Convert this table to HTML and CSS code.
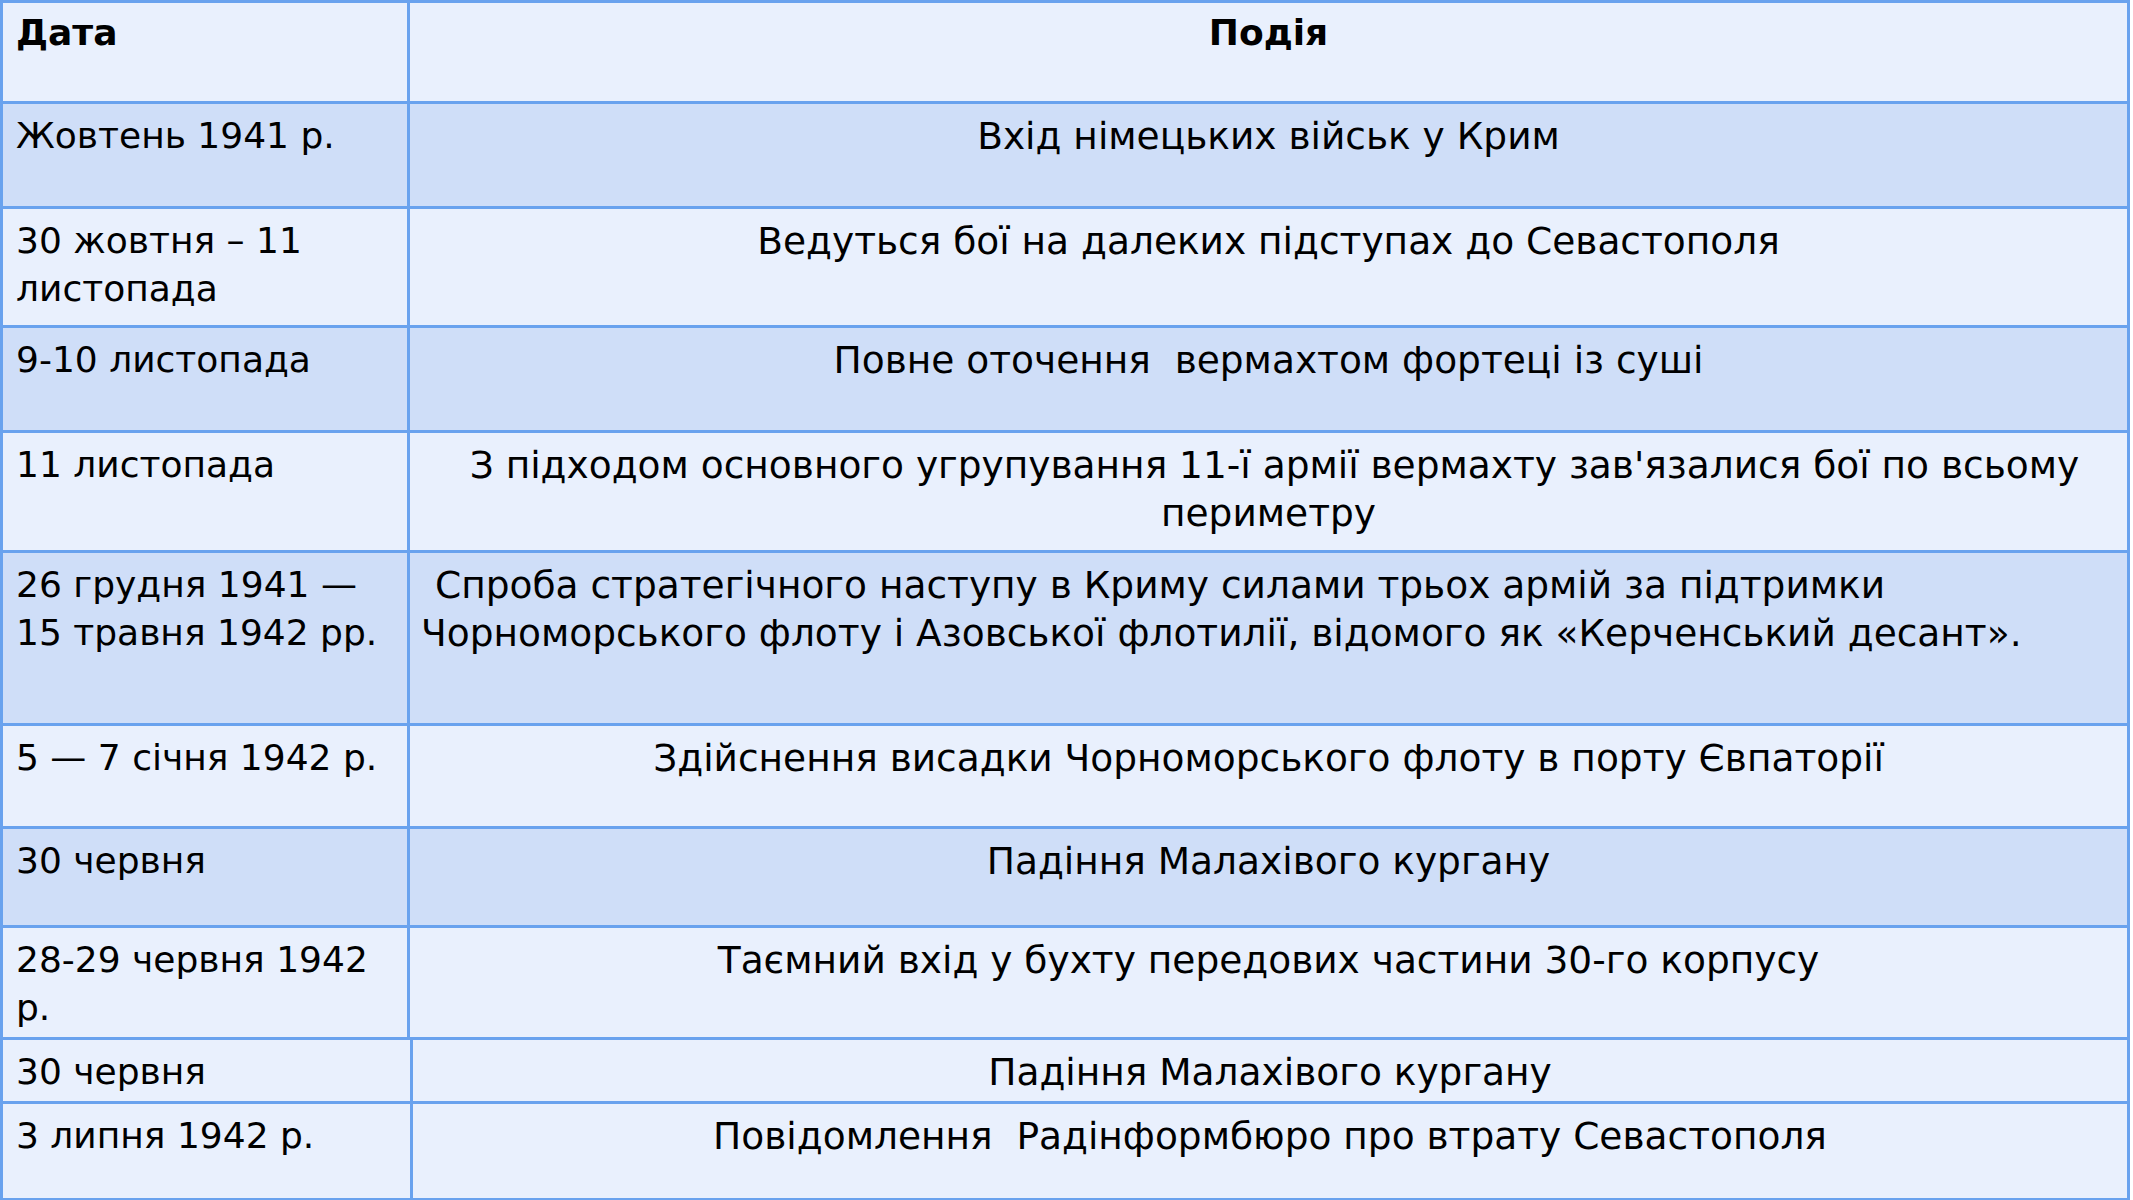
FILE: index.html
```html
<!DOCTYPE html>
<html lang="uk">
<head>
<meta charset="utf-8">
<title>Оборона Севастополя</title>
<link rel="stylesheet" href="styles.css">
</head>
<body>
<div class="table">
  <div class="row light h-head">
    <div class="cell date head">Дата</div>
    <div class="cell event head">Подія</div>
  </div>
  <div class="row dark h1">
    <div class="cell date">Жовтень 1941 р.</div>
    <div class="cell event">Вхід німецьких військ у Крим</div>
  </div>
  <div class="row light h2">
    <div class="cell date">30 жовтня – 11<br>листопада</div>
    <div class="cell event">Ведуться бої на далеких підступах до Севастополя</div>
  </div>
  <div class="row dark h3">
    <div class="cell date">9-10 листопада</div>
    <div class="cell event">Повне оточення&nbsp; вермахтом фортеці із суші</div>
  </div>
  <div class="row light h4">
    <div class="cell date">11 листопада</div>
    <div class="cell event">&nbsp;З підходом основного угрупування 11-ї армії вермахту зав'язалися бої по всьому<br>периметру</div>
  </div>
  <div class="row dark h5">
    <div class="cell date">26 грудня 1941 —<br>15 травня 1942 рр.</div>
    <div class="cell event left"><span class="indent">Спроба стратегічного наступу в Криму силами трьох армій за підтримки</span><br>Чорноморського флоту і Азовської флотилії, відомого як «Керченський десант».</div>
  </div>
  <div class="row light h6">
    <div class="cell date">5 — 7 січня 1942 р.</div>
    <div class="cell event">Здійснення висадки Чорноморського флоту в порту Євпаторії</div>
  </div>
  <div class="row dark h7">
    <div class="cell date">30 червня</div>
    <div class="cell event">Падіння Малахівого кургану</div>
  </div>
  <div class="row light h8">
    <div class="cell date">28-29 червня 1942<br>р.</div>
    <div class="cell event">Таємний вхід у бухту передових частини 30-го корпусу</div>
  </div>
  <div class="row light h9 shifted">
    <div class="cell date">30 червня</div>
    <div class="cell event">Падіння Малахівого кургану</div>
  </div>
  <div class="row light h10 shifted last">
    <div class="cell date">3 липня 1942 р.</div>
    <div class="cell event">Повідомлення&nbsp; Радінформбюро про втрату Севастополя</div>
  </div>
</div>
</body>
</html>
```

FILE: styles.css
```css
html, body {
  margin: 0;
  padding: 0;
  background: #ffffff;
}

body {
  width: 2133px;
  height: 1200px;
  overflow: hidden;
  font-family: "DejaVu Sans", "Open Sans", sans-serif;
  color: #000000;
}

.table {
  width: 2130px;
  height: 1200px;
  box-sizing: border-box;
  display: flex;
  flex-direction: column;
  border-top: 3px solid #69a2ee;
  border-left: 3px solid #69a2ee;
  border-right: 3px solid #69a2ee;
}

.row {
  display: grid;
  grid-template-columns: 407px 1fr;
  box-sizing: border-box;
  border-bottom: 3px solid #69a2ee;
  flex: none;
}

.row.shifted {
  grid-template-columns: 410px 1fr;
}

.row.last {
  border-bottom: 2px solid #69a2ee;
}

.light { background: #e9f0fd; }
.dark { background: #cfdef8; }

.h-head { height: 101px; }
.h1 { height: 105px; }
.h2 { height: 119px; }
.h3 { height: 105px; }
.h4 { height: 120px; }
.h5 { height: 173px; }
.h6 { height: 103px; }
.h7 { height: 99px; }
.h8 { height: 112px; }
.h9 { height: 64px; }
.h10 { height: 96px; }

.cell {
  font-size: 36px;
  line-height: 48px;
  padding-top: 8px;
  white-space: nowrap;
}

.head {
  font-weight: bold;
  padding-top: 6px;
}

.date {
  padding-left: 13px;
  border-right: 3px solid #69a2ee;
}

.event {
  text-align: center;
  font-size: 37.5px;
}

.event.head {
  font-size: 36px;
}

.event.left {
  text-align: left;
  padding-left: 11px;
}

.indent {
  padding-left: 14px;
}
```
